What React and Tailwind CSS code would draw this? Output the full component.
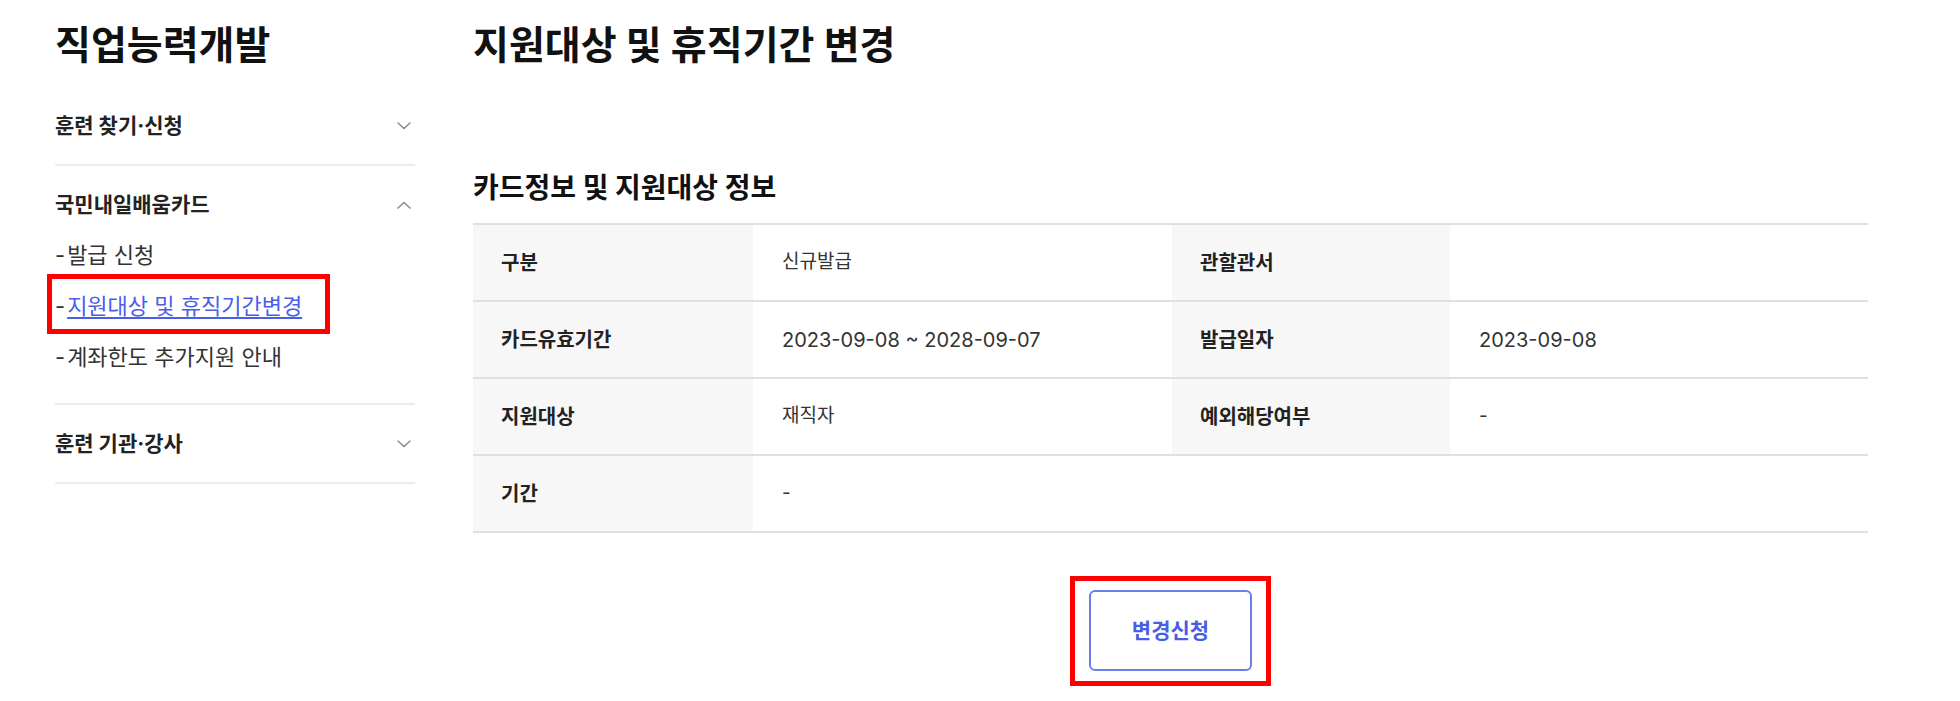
import React from "react";

const rows = [
  [
    { label: "구분", value: "신규발급" },
    { label: "관할관서", value: "" },
  ],
  [
    { label: "카드유효기간", value: "2023-09-08 ~ 2028-09-07" },
    { label: "발급일자", value: "2023-09-08" },
  ],
  [
    { label: "지원대상", value: "재직자" },
    { label: "예외해당여부", value: "-" },
  ],
];

function Chevron({ up = false }) {
  return (
    <svg width="14" height="8" viewBox="0 0 14 8" fill="none" className="mr-[4px]">
      <path
        d={up ? "M1 7L7 1.5L13 7" : "M1 1L7 6.5L13 1"}
        stroke="#8a8a8a"
        strokeWidth="1.5"
        strokeLinecap="round"
        strokeLinejoin="round"
      />
    </svg>
  );
}

function SubItem({ children, active = false }) {
  return (
    <li className="relative flex h-[51px] items-center text-[22px] leading-[51px] text-[#333]">
      <span className="mr-[2px]">-</span>
      {active ? (
        <a href="#" className="text-[#4a5ee8] underline decoration-[1.5px] underline-offset-[3px]">
          {children}
        </a>
      ) : (
        <span>{children}</span>
      )}
      {active && (
        <span className="pointer-events-none absolute -left-[8px] -top-[7px] h-[60px] w-[283px] border-[5px] border-[#ff0000]" />
      )}
    </li>
  );
}

function Label({ children }) {
  return (
    <div className="flex items-center bg-[#f7f7f7] pl-[28px] text-[20px] font-semibold text-[#222]">{children}</div>
  );
}

function Value({ children }) {
  const numeric = /\d/.test(children);
  return (
    <div className={`flex items-center pl-[29px] text-[#333] ${numeric ? "text-[20px]" : "text-[19px]"}`}>
      {children}
    </div>
  );
}

export default function App() {
  return (
    <div className="flex min-h-[701px] bg-white pl-[55px] pt-[20px] font-['Inter','Noto_Sans_CJK_KR',sans-serif] text-[#222]">
      {/* sidebar */}
      <aside className="w-[360px] shrink-0">
        <h1 className="text-[39px] font-bold leading-[50px] text-[#111]">직업능력개발</h1>

        <nav className="mt-[17px]">
          <div className="flex h-[79px] items-center justify-between border-b-2 border-[#ececec]">
            <span className="text-[21px] font-bold">훈련 찾기·신청</span>
            <Chevron />
          </div>

          <div className="border-b-2 border-[#ececec] pb-[20px]">
            <div className="flex items-center justify-between pb-[13px] pt-[27px] leading-[24px]">
              <span className="text-[21px] font-bold">국민내일배움카드</span>
              <Chevron up />
            </div>
            <ul>
              <SubItem>발급 신청</SubItem>
              <SubItem active>지원대상 및 휴직기간변경</SubItem>
              <SubItem>계좌한도 추가지원 안내</SubItem>
            </ul>
          </div>

          <div className="flex h-[79px] items-center justify-between border-b-2 border-[#ececec]">
            <span className="text-[21px] font-bold">훈련 기관·강사</span>
            <Chevron />
          </div>
        </nav>
      </aside>

      {/* main */}
      <main className="ml-[58px] w-[1395px]">
        <h2 className="text-[39px] font-bold leading-[50px] text-[#111]">지원대상 및 휴직기간 변경</h2>

        <h3 className="mt-[100px] text-[28px] font-bold leading-[36px] text-[#111]">
          카드정보 및 지원대상 정보
        </h3>

        <div className="mt-[17px] border-t-2 border-[#e0e0e0]">
          {rows.map((row, i) => (
            <div
              key={i}
              className="grid h-[77px] grid-cols-[280px_419px_278px_418px] border-b-2 border-[#e0e0e0]"
            >
              {row.map((cell) => (
                <React.Fragment key={cell.label}>
                  <Label>{cell.label}</Label>
                  <Value>{cell.value}</Value>
                </React.Fragment>
              ))}
            </div>
          ))}
          <div className="grid h-[77px] grid-cols-[280px_1fr] border-b-2 border-[#e0e0e0]">
            <Label>기간</Label>
            <Value>-</Value>
          </div>
        </div>

        <div className="mt-[43px] flex justify-center">
          <div className="border-[5px] border-[#ff0000] px-[14px] pb-[10px] pt-[9px]">
            <button
              type="button"
              className="h-[81px] w-[163px] rounded-[6px] border-2 border-[#6b7fea] bg-white text-[21px] font-bold text-[#4a5ee3]"
            >
              변경신청
            </button>
          </div>
        </div>
      </main>
    </div>
  );
}
